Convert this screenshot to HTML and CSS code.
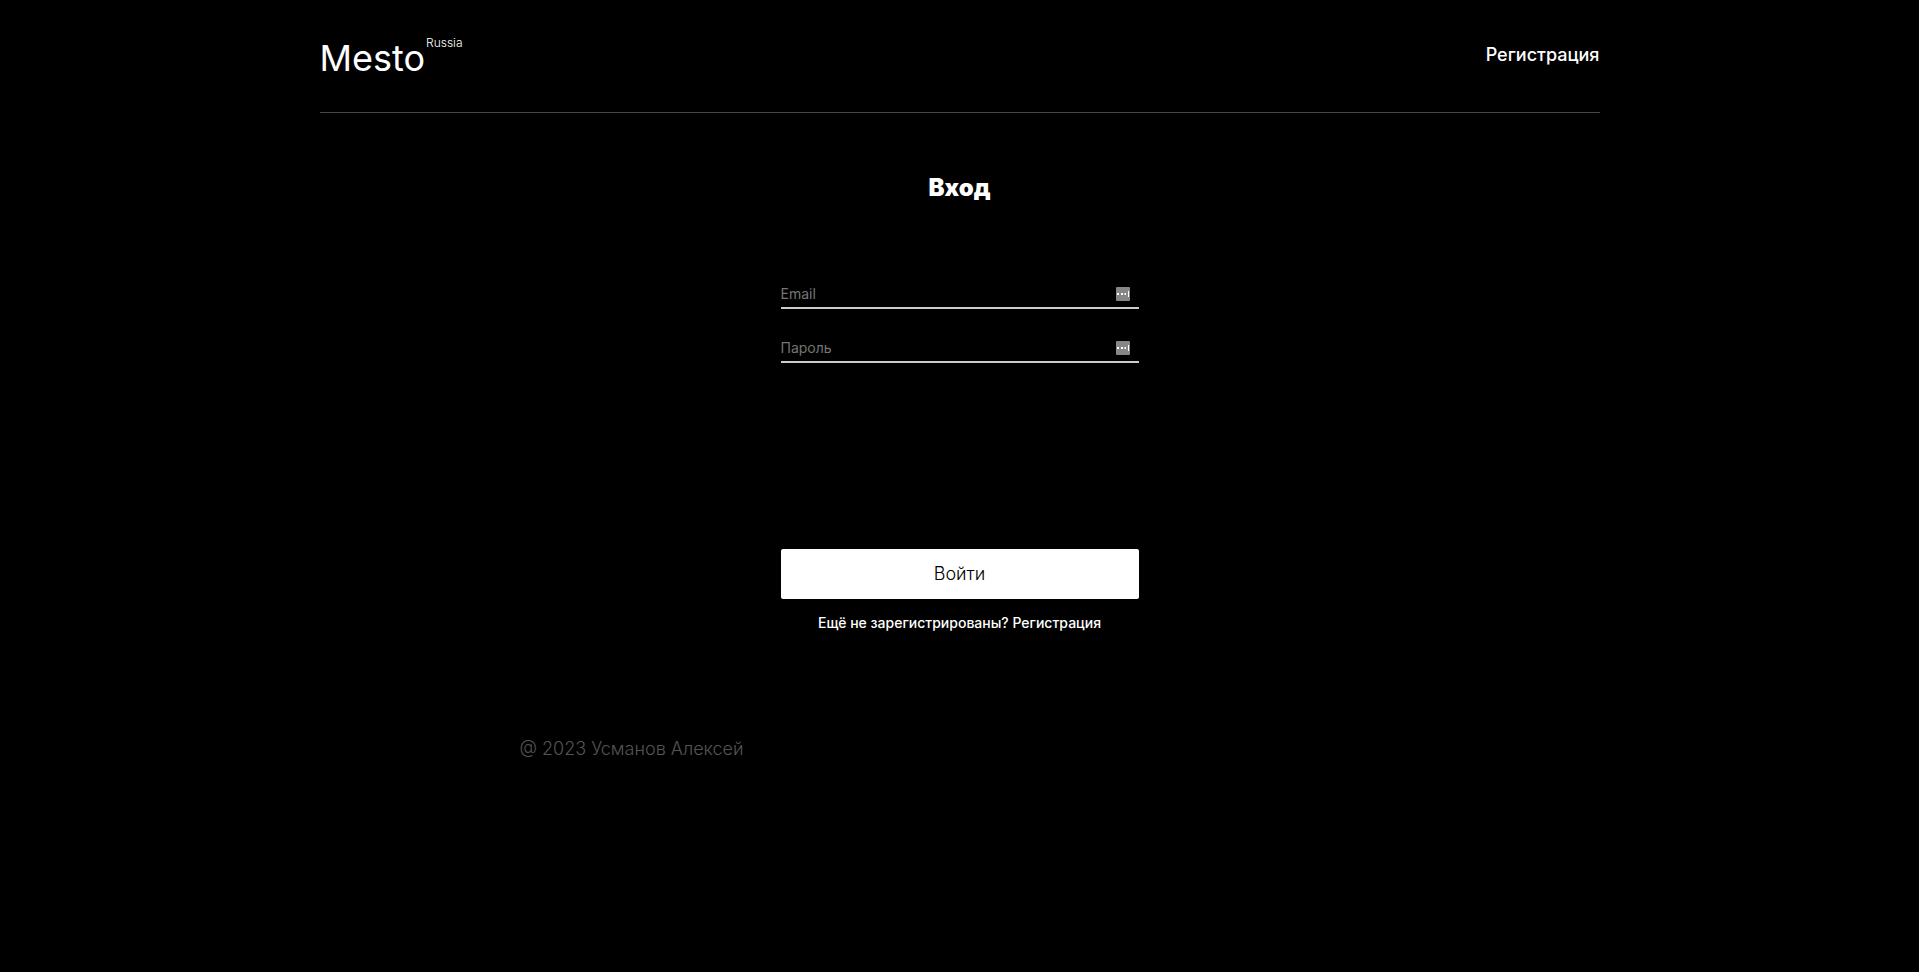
FILE: index.html
```html
<!DOCTYPE html>
<html lang="ru">
<head>
<meta charset="utf-8">
<meta name="viewport" content="width=device-width, initial-scale=1">
<title>Mesto Russia</title>
<link rel="stylesheet" href="styles.css">
</head>
<body>
<div class="page">
  <header class="header">
    <div class="logo"><span class="logo-name">Mesto</span><span class="logo-region">Russia</span></div>
    <a class="header-link" href="#">Регистрация</a>
  </header>
  <main class="auth">
    <h1 class="auth-title">Вход</h1>
    <form class="auth-form">
      <div class="field">
        <input class="field-input" type="email" placeholder="Email" aria-label="Email">
        <svg class="field-icon" viewBox="0 0 14 14" aria-hidden="true"><rect width="14" height="14" rx="1" fill="#868686"/><path d="M1 6h2v2H1zM5 6h2v2H5zM8.500 6h1.500v2H8.500zM12 4h1v6h-1z" fill="#fff"/></svg>
      </div>
      <div class="field">
        <input class="field-input" type="password" placeholder="Пароль" aria-label="Пароль">
        <svg class="field-icon" viewBox="0 0 14 14" aria-hidden="true"><rect width="14" height="14" rx="1" fill="#868686"/><path d="M1 6h2v2H1zM5 6h2v2H5zM8.500 6h1.500v2H8.500zM12 4h1v6h-1z" fill="#fff"/></svg>
      </div>
      <button class="submit" type="button">Войти</button>
    </form>
    <a class="auth-link" href="#">Ещё не зарегистрированы? Регистрация</a>
  </main>
  <footer class="footer">@ 2023 Усманов Алексей</footer>
</div>
</body>
</html>
```
FILE: styles.css
```css
* {
  box-sizing: border-box;
}

body {
  margin: 0;
  background: #000;
  color: #fff;
  font-family: Inter, "Liberation Sans", sans-serif;
}

.page {
  max-width: 1280px;
  margin: 0 auto;
}

.header {
  display: flex;
  justify-content: space-between;
  align-items: flex-start;
  padding: 36px 0 32px;
  border-bottom: 1px solid #474747;
}

.logo {
  display: flex;
  align-items: flex-start;
  gap: 1px;
}

.logo-name {
  font-size: 36px;
  line-height: 44px;
}

.logo-region {
  font-size: 12px;
  font-weight: 300;
  line-height: 14px;
}

.header-link {
  margin-top: 8px;
  color: #fff;
  font-size: 18px;
  font-weight: 500;
  line-height: 22px;
  text-decoration: none;
}

.auth {
  display: flex;
  flex-direction: column;
  align-items: center;
  padding-top: 60px;
}

.auth-title {
  margin: 0 0 79px;
  font-size: 24px;
  font-weight: 900;
  line-height: 29px;
}

.auth-form {
  display: flex;
  flex-direction: column;
  gap: 26px;
  width: 100%;
  max-width: 358px;
}

.field {
  position: relative;
}

.field-input {
  display: block;
  width: 100%;
  height: 28px;
  padding: 0 0 2px;
  border: 0;
  border-bottom: 2px solid #ccc;
  border-radius: 0;
  outline: 0;
  background: transparent;
  color: #fff;
  font: 400 14px/17px Inter, "Liberation Sans", sans-serif;
}

.field-input::placeholder {
  color: #757575;
  opacity: 1;
}

.field-icon {
  position: absolute;
  top: 6px;
  right: 9px;
  width: 14px;
  height: 14px;
}

.submit {
  height: 50px;
  margin-top: 160px;
  border: 0;
  border-radius: 2px;
  background: #fff;
  color: #000;
  font: 300 18px/22px Inter, "Liberation Sans", sans-serif;
}

.auth-link {
  margin-top: 15px;
  color: #fff;
  font-size: 14px;
  font-weight: 500;
  line-height: 17px;
  text-decoration: none;
}

.footer {
  max-width: 880px;
  margin: 0 auto;
  padding: 107px 0 60px;
  color: #545454;
  font-size: 18px;
  font-weight: 300;
  line-height: 22px;
}
```
